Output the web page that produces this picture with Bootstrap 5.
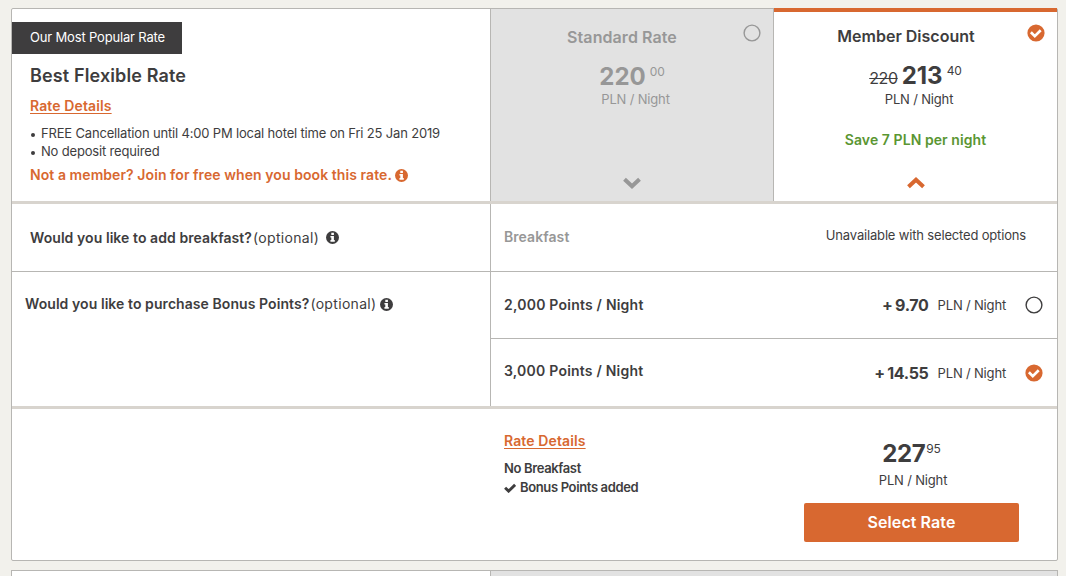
<!DOCTYPE html>
<html lang="en">
<head>
    <meta charset="UTF-8">
    <meta name="viewport" content="width=device-width, initial-scale=1">
    <title>Select a rate</title>
    <link href="https://cdn.jsdelivr.net/npm/bootstrap@5.3.0/dist/css/bootstrap.min.css" rel="stylesheet">
    <style>
        :root {
            --ink: #3e3d3e;
            --muted: #979797;
            --orange: #d86830;
            --line: #b7b6b3;
            --rule: #d8d4ce;
        }
        body {
            background: #f2f1ec;
            color: var(--ink);
            font-family: Inter, "Liberation Sans", sans-serif;
            font-size: 13px;
            line-height: 18px;
            letter-spacing: -.17px;
        }
        svg { display: block; flex: none; }

        /* boxes and rows */
        .rates { width: 1047px; margin-left: 11px; padding-top: 8px; gap: 9px; }
        .rate-box { background: #fff; border: 1px solid var(--line); border-radius: 2px; }
        .col-info { width: 479px; flex: none; border-right: 1px solid var(--line); }
        .col-rate { width: 283px; }
        .rule-b { border-bottom: 3px solid var(--rule); }
        .line-b { border-bottom: 1px solid var(--line); }
        .row-top { height: 195px; }
        .row-opt { height: 68px; }
        .row-opt.last { height: 67px; }
        .row-total { height: 151px; }
        .row-next { height: 5px; }
        .off { background: #e2e2e2; color: var(--muted); border-right: 1px solid var(--line); }
        .picked { border-top: 4px solid var(--orange); margin-top: -1px; }

        /* text */
        .label14 { font-size: 14px; font-weight: 600; letter-spacing: .07px; }
        .optional { font-size: 14px; letter-spacing: .32px; margin-left: 1px; }
        .points { letter-spacing: .22px; }
        .orange { color: var(--orange); }
        .muted { color: var(--muted); }
        .flag { width: 170px; height: 32px; margin-top: 13px; padding-left: 18px; background: var(--ink); color: #fff; line-height: 31px; }
        .info-body { padding: 10px 0 0 18px; }
        .rate-title { font-size: 18px; line-height: 24px; font-weight: 600; letter-spacing: .13px; margin-bottom: 9px; }
        .rate-link { color: var(--orange); font-size: 14px; font-weight: 600; letter-spacing: .12px; text-underline-offset: 2px; }
        .terms { padding-top: 9px; }
        .terms li { display: flex; align-items: center; gap: 6px; }
        .terms li::before { content: ""; width: 4px; height: 4px; margin: 3px 0 0 1px; border-radius: 50%; background: var(--ink); }
        .join { gap: 3px; margin-top: 6px; }

        .rate-name { font-size: 16px; line-height: 20px; font-weight: 600; letter-spacing: .08px; margin-top: 18px; padding-right: 20px; }
        .picked .rate-name { margin-top: 14px; padding-right: 19px; letter-spacing: 0; }
        .price { margin-top: 16px; margin-bottom: -1px; }
        .picked .price { margin-bottom: 0; }
        .amount { font-size: 24px; line-height: 28px; font-weight: 700; letter-spacing: 0; }
        .cents { font-size: 12px; line-height: 12px; letter-spacing: -.1px; margin: 3px 0 0 4px; }
        .was { font-size: 16px; line-height: 20px; letter-spacing: -.4px; margin: 6px 4px 0 0; }
        .per-night { padding-left: 7px; }
        .save { color: #5a9632; margin-top: 23px; }
        .tick { position: absolute; top: 15px; right: 12px; }
        .picked .tick { top: 12px; }
        .arrow { position: absolute; bottom: 11px; left: 131px; }
        .picked .arrow { left: 132px; transform: rotate(180deg); }

        .breakfast-q { padding-left: 18px; }
        .breakfast-q svg { margin-left: 7px; }
        .breakfast { padding: 0 31px 6px 13px; }
        .bonus-q { padding: 23px 0 0 13px; }
        .bonus-q svg { margin: 3px 0 0 3px; }
        .bonus { padding: 0 14px 0 13px; }
        .extra { font-size: 16px; font-weight: 700; letter-spacing: -.3px; word-spacing: -1px; margin-right: 9px; }
        .extra-unit { margin-right: 19px; }

        .summary { padding: 23px 0 0 492px; }
        .summary-lines { line-height: 19px; font-weight: 600; letter-spacing: -.36px; margin-top: 9px; }
        .total { width: 215px; margin: 31px 38px 0 0; }
        .total .amount { letter-spacing: -.4px; }
        .total .cents { margin: 3px 0 0 1px; }
        .total .per-night { margin-top: 3px; padding-left: 3px; }
        .btn-select { width: 100%; height: 39px; margin-top: 14px; padding: 0 0 2px; background: var(--orange); color: #fff; font-size: 16px; font-weight: 600; letter-spacing: .08px; border: 0; border-radius: 2px; }
        .btn-select:hover { background: #c25a26; color: #fff; }
    </style>
</head>
<body>

<svg class="d-none">
    <symbol id="info" viewBox="0 0 12 12">
        <circle cx="6" cy="6" r="6" fill="currentColor"/>
        <path d="M4.1 4.6h3.2v3.8h.8V10h-4V8.400h.8V6.100h-.8zM4.900 1.700h2.400v2H4.900z" fill="#fff"/>
    </symbol>
    <symbol id="radio" viewBox="0 0 18 18">
        <circle cx="9" cy="9" r="7.900" fill="none" stroke="currentColor" stroke-width="1.400"/>
    </symbol>
    <symbol id="radio-on" viewBox="0 0 18 18">
        <circle cx="9" cy="9" r="8.600" fill="currentColor"/>
        <path d="M3.900 8.200l3.900 3.900 5.900-5.900" fill="none" stroke="#fff" stroke-width="2.700"/>
    </symbol>
    <symbol id="chevron" viewBox="0 0 20 14">
        <path d="M2.500 3.200L10 10.200l7.500-7" fill="none" stroke="currentColor" stroke-width="4"/>
    </symbol>
    <symbol id="check" viewBox="0 0 12 10">
        <path d="M1.100 4.700l3.500 3.400 6.500-6.300" fill="none" stroke="currentColor" stroke-width="2.900"/>
    </symbol>
</svg>

<main class="rates d-flex flex-column">
    <section class="rate-box">
        <!-- rate header -->
        <div class="row-top rule-b d-flex">
            <div class="col-info">
                <div class="flag">Our Most Popular Rate</div>
                <div class="info-body">
                    <h2 class="rate-title">Best Flexible Rate</h2>
                    <div><a href="#" class="rate-link">Rate Details</a></div>
                    <ul class="terms list-unstyled mb-0">
                        <li>FREE Cancellation until 4:00 PM local hotel time on Fri 25 Jan 2019</li>
                        <li>No deposit required</li>
                    </ul>
                    <div class="join label14 orange d-flex align-items-center">
                        Not a member? Join for free when you book this rate.
                        <svg width="13" height="13"><use href="#info"/></svg>
                    </div>
                </div>
            </div>
            <div class="col-rate off position-relative d-flex flex-column align-items-center">
                <div class="rate-name">Standard Rate</div>
                <div class="price d-flex"><span class="amount">220</span><span class="cents">00</span></div>
                <div class="per-night">PLN / Night</div>
                <svg class="tick" width="18" height="18"><use href="#radio"/></svg>
                <svg class="arrow" width="20" height="14"><use href="#chevron"/></svg>
            </div>
            <div class="col-rate picked position-relative d-flex flex-column align-items-center">
                <div class="rate-name">Member Discount</div>
                <div class="price d-flex"><s class="was">220</s><span class="amount">213</span><span class="cents">40</span></div>
                <div class="per-night">PLN / Night</div>
                <div class="save label14">Save 7 PLN per night</div>
                <svg class="tick orange" width="18" height="18"><use href="#radio-on"/></svg>
                <svg class="arrow orange" width="20" height="14"><use href="#chevron"/></svg>
            </div>
        </div>

        <!-- breakfast -->
        <div class="row-opt line-b d-flex">
            <div class="col-info breakfast-q d-flex align-items-center">
                <span class="label14">Would you like to add breakfast?</span>
                <span class="optional">(optional)</span>
                <svg width="13" height="13"><use href="#info"/></svg>
            </div>
            <div class="breakfast flex-fill d-flex align-items-center justify-content-between">
                <span class="label14 muted pt-1">Breakfast</span>
                <span>Unavailable with selected options</span>
            </div>
        </div>

        <!-- bonus points -->
        <div class="rule-b d-flex">
            <div class="col-info bonus-q d-flex align-items-start">
                <span class="label14">Would you like to purchase Bonus Points?</span>
                <span class="optional">(optional)</span>
                <svg width="13" height="13"><use href="#info"/></svg>
            </div>
            <div class="flex-fill">
                <div class="bonus row-opt last line-b d-flex align-items-center">
                    <span class="label14 points me-auto">2,000 Points / Night</span>
                    <span class="extra">+ 9.70</span>
                    <span class="extra-unit">PLN / Night</span>
                    <svg width="18" height="18"><use href="#radio"/></svg>
                </div>
                <div class="bonus row-opt last d-flex align-items-center">
                    <span class="label14 points me-auto pb-1">3,000 Points / Night</span>
                    <span class="extra">+ 14.55</span>
                    <span class="extra-unit">PLN / Night</span>
                    <svg class="orange" width="18" height="18"><use href="#radio-on"/></svg>
                </div>
            </div>
        </div>

        <!-- summary -->
        <div class="row-total d-flex justify-content-between">
            <div class="summary">
                <a href="#" class="rate-link">Rate Details</a>
                <div class="summary-lines">
                    <div>No Breakfast</div>
                    <div class="d-flex align-items-center">
                        <svg class="me-1" width="12" height="10"><use href="#check"/></svg>Bonus Points added
                    </div>
                </div>
            </div>
            <div class="total d-flex flex-column align-items-center">
                <div class="d-flex"><span class="amount">227</span><span class="cents">95</span></div>
                <div class="per-night">PLN / Night</div>
                <button type="button" class="btn btn-select">Select Rate</button>
            </div>
        </div>
    </section>

    <!-- next rate -->
    <section class="rate-box border-bottom-0 rounded-0">
        <div class="row-next d-flex">
            <div class="col-info"></div>
            <div class="off flex-fill border-end-0"></div>
        </div>
    </section>
</main>

<script src="https://cdn.jsdelivr.net/npm/bootstrap@5.3.0/dist/js/bootstrap.bundle.min.js"></script>
</body>
</html>
